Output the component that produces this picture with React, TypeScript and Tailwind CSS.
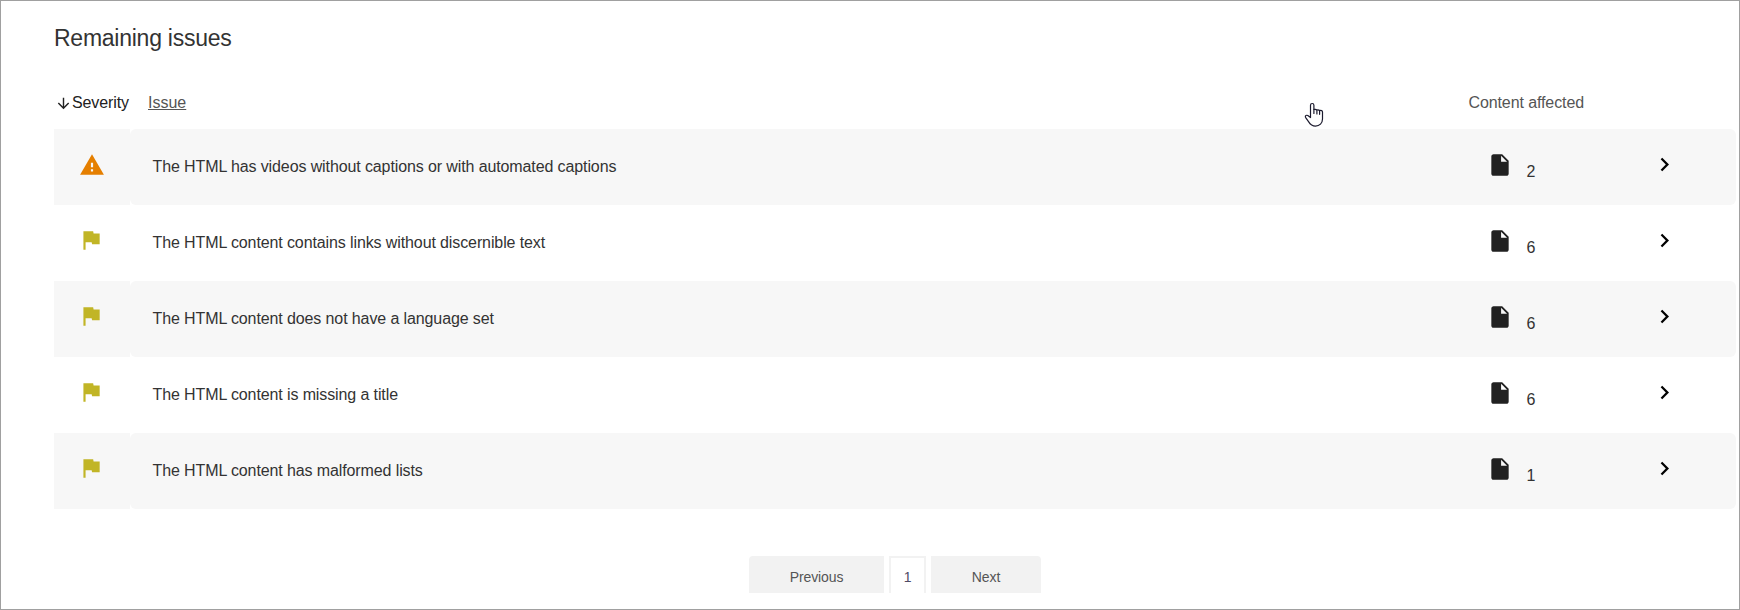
import React from 'react';
import {
  MdArrowDownward,
  MdChevronRight,
  MdFlag,
  MdInsertDriveFile,
  MdWarning,
} from 'react-icons/md';

interface Issue {
  title: string;
  severity: 'major' | 'minor';
  affected: number;
}

const issues: Issue[] = [
  {
    title: 'The HTML has videos without captions or with automated captions',
    severity: 'major',
    affected: 2,
  },
  {
    title: 'The HTML content contains links without discernible text',
    severity: 'minor',
    affected: 6,
  },
  {
    title: 'The HTML content does not have a language set',
    severity: 'minor',
    affected: 6,
  },
  {
    title: 'The HTML content is missing a title',
    severity: 'minor',
    affected: 6,
  },
  {
    title: 'The HTML content has malformed lists',
    severity: 'minor',
    affected: 1,
  },
];

const IssueRow: React.FC<{ issue: Issue }> = ({ issue }) => (
  <li className="group flex h-[76px]">
    <div className="w-[76px] pt-[22px] pl-[25px] group-odd:bg-[#f7f7f7]">
      {issue.severity === 'major' ? (
        <MdWarning size={26} className="mt-px text-[#e57f00]" />
      ) : (
        <MdFlag size={26} className="-ml-px text-[#c1b526]" />
      )}
    </div>
    <div className="flex flex-1 rounded-md group-odd:bg-[#f7f7f7]">
      <p className="flex-1 pt-[26px] pl-[22.5px] leading-6 tracking-[-0.11px]">
        {issue.title}
      </p>
      <div className="flex w-[164px] pt-[23px]">
        <MdInsertDriveFile size={26} className="text-[#212121]" />
        <span className="mt-2 ml-[13.5px] leading-6">{issue.affected}</span>
      </div>
      <MdChevronRight size={27} className="mt-[22px] mr-[58px] text-black" />
    </div>
  </li>
);

const HandCursor = () => (
  <svg
    width="20"
    height="26"
    viewBox="0 0 20 26"
    className="absolute top-[101px] left-[1303px]"
    fill="white"
    stroke="#1c1b2e"
    strokeWidth="1.2"
    strokeLinejoin="round"
    strokeLinecap="round"
  >
    <path d="M6.5 15.5V3.2a1.7 1.7 0 0 1 3.4 0V7.5c1.2-.4 2.5 0 3 .5 1-.3 2.2 0 2.7.5 1.5-.3 2.9.2 2.9 1.6v7c0 4.2-3 7-7 7-3.3 0-5.3-1.7-6.8-4.2L1.5 15.3c-.7-1.7 1-2.5 2.3-1.7z" />
    <path d="M9.9 7.5v4M12.9 8.3v3.6M15.6 9v3.3" />
  </svg>
);

const App = () => (
  <main className="relative h-[610px] w-[1740px] overflow-hidden border border-[#a0a0a0] bg-white pl-[53px] pr-[3px] font-['Liberation_Sans',Arial,sans-serif] text-base text-[#333]">
    <h2 className="pt-[19px] text-[23px] leading-9 tracking-[-0.25px]">
      Remaining issues
    </h2>

    <div className="mt-[35px] flex h-[38px] leading-6">
      <div className="flex w-[94px] text-[#212121]">
        <MdArrowDownward size={17} className="mt-1 ml-[1px]" />
        <span className="tracking-[-0.1px]">Severity</span>
      </div>
      <a className="flex-1 text-[#555] underline">Issue</a>
      <span className="mr-[152px] tracking-[-0.1px] text-[#555]">
        Content affected
      </span>
    </div>

    <ul>
      {issues.map((issue) => (
        <IssueRow key={issue.title} issue={issue} />
      ))}
    </ul>

    <nav className="mt-[47px] ml-[695px] flex h-[37px] gap-[5px] text-sm tracking-[-0.1px] text-[#555]">
      <button className="w-[135px] rounded-tl bg-[#f2f2f2] pt-1">Previous</button>
      <button className="w-[37px] border-x-2 border-t-2 border-[#f2f2f2] pt-0.5 text-[#4f4b66]">
        1
      </button>
      <button className="w-[110px] rounded-tr bg-[#f2f2f2] pt-1">Next</button>
    </nav>

    <HandCursor />
  </main>
);

export default App;
